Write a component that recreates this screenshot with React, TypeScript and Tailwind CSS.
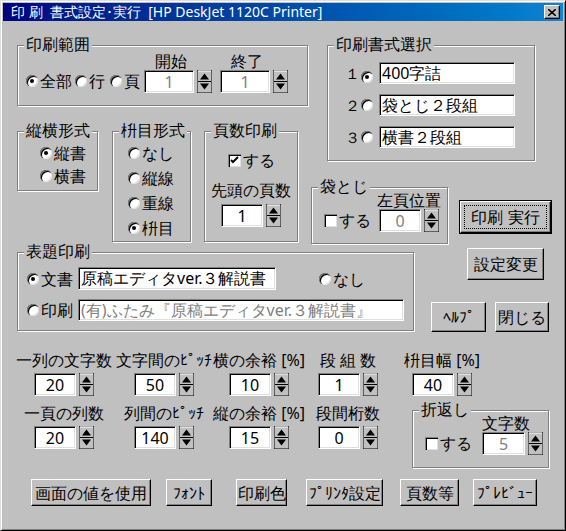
import React from "react";

const SUNK = "bg-white border border-t-[#808080] border-l-[#808080] border-r-white border-b-white shadow-[inset_1px_1px_0_#000,inset_-1px_-1px_0_#dfdfdf]";
const RAISED = "bg-[#c0c0c0] border border-t-white border-l-white border-r-black border-b-black shadow-[inset_-1px_-1px_0_#808080]";

function Group({ label, className, children }: { label: string; className?: string; children?: React.ReactNode }) {
  return (
    <div className={"relative border border-[#808080] shadow-[1px_1px_0_#fff,inset_1px_1px_0_#fff] " + (className || "")}>
      <span className="absolute -top-[11px] left-[6px] px-[2px] bg-[#c0c0c0] leading-[18px] text-[16px] whitespace-nowrap">{label}</span>
      {children}
    </div>
  );
}

function Radio({ on }: { on?: boolean }) {
  return (
    <span className="inline-flex shrink-0 w-[12px] h-[12px] rounded-full bg-white shadow-[inset_1px_1px_0_#808080,inset_2px_2px_0_#000,inset_-1px_-1px_0_#dfdfdf] items-center justify-center">
      {on && <span className="w-[4px] h-[4px] rounded-full bg-black" />}
    </span>
  );
}

function Check({ on }: { on?: boolean }) {
  return (
    <span className="inline-flex shrink-0 w-[13px] h-[13px] bg-white shadow-[inset_1px_1px_0_#808080,inset_2px_2px_0_#000,inset_-1px_-1px_0_#dfdfdf] items-center justify-center">
      {on && (
        <svg width="9" height="9" viewBox="0 0 9 9"><path d="M1 4 L3 6 L8 1" stroke="#000" strokeWidth="2" fill="none" /></svg>
      )}
    </span>
  );
}

function Spin({ h = 23 }: { h?: number }) {
  return (
    <svg width="15" height={h} viewBox={`0 0 15 ${h}`} className="shrink-0 block">
      <rect x="0" y="0" width="15" height={h} fill="#c0c0c0" />
      <path d={`M0 0 H15 V${h} H0 Z`} fill="none" stroke="#000" strokeWidth="1" />
      <path d={`M1 1 H14`} stroke="#fff" />
      <path d={`M7.5 ${h / 2 - 8} L12 ${h / 2 - 2} L3 ${h / 2 - 2} Z`} fill="#000" />
      <path d={`M7.5 ${h / 2 + 8} L12 ${h / 2 + 2} L3 ${h / 2 + 2} Z`} fill="#000" />
      <path d={`M1 ${h / 2} H14`} stroke="#000" />
    </svg>
  );
}

function Num({ v, w = 42, h = 23, dis }: { v: string; w?: number; h?: number; dis?: boolean }) {
  return (
    <div className="flex items-center gap-[3px]">
      <div className={SUNK + " flex items-center justify-center text-[16px] " + (dis ? "text-[#808080]" : "text-black")} style={{ width: w, height: h }}>{v}</div>
      <Spin h={h} />
    </div>
  );
}

function Btn({ children, className }: { children: React.ReactNode; className?: string }) {
  return <div className={RAISED + " flex items-center justify-center text-[16px] whitespace-nowrap " + (className || "")}>{children}</div>;
}

function Field({ label, v, w }: { label: string; v: string; w: number }) {
  return (
    <div className="flex flex-col items-center shrink-0" style={{ width: w }}>
      <div className="text-[16px] leading-[18px] whitespace-nowrap">{label}</div>
      <div className="mt-[4px]"><Num v={v} /></div>
    </div>
  );
}

export default function App() {
  return (
    <div className="w-[566px] h-[531px] bg-[#c0c0c0] text-black overflow-hidden border border-t-[#dfdfdf] border-l-[#dfdfdf] border-r-black border-b-black shadow-[inset_1px_1px_0_#fff,inset_-1px_-1px_0_#808080] p-[2px] font-['Noto_Sans_CJK_JP','Noto_Sans',sans-serif]">
      {/* title bar */}
      <div className="h-[18px] flex items-center bg-gradient-to-r from-[#000080] to-[#1084d0] text-white text-[14px] pl-[8px] pr-[3px]">
        <span className="leading-[18px] whitespace-nowrap">印 刷&nbsp; 書式設定･実行&nbsp; [HP DeskJet 1120C Printer]</span>
        <div className={RAISED + " ml-auto w-[16px] h-[14px] flex items-center justify-center"}>
          <svg width="8" height="7" viewBox="0 0 8 7"><path d="M0 0 L8 7 M8 0 L0 7" stroke="#000" strokeWidth="1.6" /></svg>
        </div>
      </div>

      {/* section A */}
      <div className="flex h-[231px]">
        <div className="ml-[14px] w-[291px] shrink-0">
          <Group label="印刷範囲" className="mt-[24px] h-[61px] w-[291px]">
            <div className="flex items-end pl-[8px] pt-[6px]">
              <div className="flex items-center h-[24px] text-[16px] whitespace-nowrap">
                <Radio on /><span className="ml-[2px]">全部</span>
                <span className="ml-[3px]"><Radio /></span><span className="ml-[2px]">行</span>
                <span className="ml-[5px]"><Radio /></span><span className="ml-[2px]">頁</span>
              </div>
              <div className="ml-[4px] flex flex-col items-center">
                <span className="text-[16px] leading-[18px] -ml-[14px]">開始</span>
                <Num v="1" w={50} dis />
              </div>
              <div className="ml-[8px] flex flex-col items-center">
                <span className="text-[16px] leading-[18px] -ml-[14px]">終了</span>
                <Num v="1" w={50} dis />
              </div>
            </div>
          </Group>
          <div className="flex items-start mt-[25px]">
            <Group label="縦横形式" className="w-[81px] h-[60px]">
              <div className="flex flex-col pl-[22px] pt-[12px] gap-[5px] text-[16px] leading-[18px]">
                <div className="flex items-center gap-[2px]"><Radio on />縦書</div>
                <div className="flex items-center gap-[2px]"><Radio />横書</div>
              </div>
            </Group>
            <Group label="枡目形式" className="ml-[14px] w-[79px] h-[111px]">
              <div className="flex flex-col pl-[15px] pt-[12px] gap-[7px] text-[16px] leading-[18px]">
                <div className="flex items-center gap-[2px]"><Radio />なし</div>
                <div className="flex items-center gap-[2px]"><Radio />縦線</div>
                <div className="flex items-center gap-[2px]"><Radio />重線</div>
                <div className="flex items-center gap-[2px]"><Radio on />枡目</div>
              </div>
            </Group>
            <Group label="頁数印刷" className="ml-[13px] w-[94px] h-[111px]">
              <div className="flex flex-col items-center pt-[19px] text-[16px] leading-[18px]">
                <div className="flex items-center gap-[2px]"><Check on />する</div>
                <div className="mt-[12px] whitespace-nowrap">先頭の頁数</div>
                <div className="mt-[5px]"><Num v="1" /></div>
              </div>
            </Group>
          </div>
        </div>
        <div className="ml-[19px] w-[225px] shrink-0">
          <Group label="印刷書式選択" className="mt-[24px] w-[208px] h-[116px]">
            <div className="flex flex-col pt-[16px] gap-[10px] text-[16px]">
              {["400字詰", "袋とじ２段組", "横書２段組"].map((t, i) => (
                <div key={t} className="flex items-center h-[22px]">
                  <span className="ml-[17px] w-[12px] text-[15px]">{["１", "２", "３"][i]}</span>
                  <span className="ml-[4px]"><Radio on={i === 0} /></span>
                  <div className={SUNK + " ml-[6px] w-[136px] h-[22px] leading-[20px] pl-[2px] whitespace-nowrap"}>{t}</div>
                </div>
              ))}
            </div>
          </Group>
          <div className="flex items-start mt-[26px] -ml-[16px]">
            <Group label="袋とじ" className="w-[137px] h-[57px]">
              <div className="flex items-end pl-[12px] pt-[3px] text-[16px] leading-[18px]">
                <div className="flex items-center gap-[2px] h-[24px]"><Check />する</div>
                <div className="ml-[6px] flex flex-col items-center">
                  <span className="whitespace-nowrap">左頁位置</span>
                  <Num v="0" dis />
                </div>
              </div>
            </Group>
            <div className="ml-[11px] mt-[13px] w-[93px] h-[34px] border border-black">
              <div className={RAISED + " w-full h-full flex items-center justify-center p-[3px]"}>
                <div className="w-full h-full border border-dotted border-black flex items-center justify-center text-[16px]">印刷 実行</div>
              </div>
            </div>
          </div>
        </div>
      </div>

      {/* section B */}
      <div className="flex items-start h-[99px]">
        <Group label="表題印刷" className="ml-[14px] w-[397px] h-[79px] shrink-0">
          <div className="flex flex-col pl-[9px] pt-[14px] gap-[9px] text-[16px] leading-[18px]">
            <div className="flex items-center">
              <Radio on /><span className="ml-[2px]">文書</span>
              <div className={SUNK + " ml-[5px] w-[198px] h-[23px] leading-[21px] pl-[2px] whitespace-nowrap"}>原稿エディタver.３解説書</div>
              <span className="ml-[43px]"><Radio /></span><span className="ml-[2px]">なし</span>
            </div>
            <div className="flex items-center">
              <Radio /><span className="ml-[2px]">印刷</span>
              <div className={SUNK + " ml-[5px] w-[326px] h-[22px] leading-[20px] pl-[2px] whitespace-nowrap text-[#808080]"}>(有)ふたみ『原稿エディタver.３解説書』</div>
            </div>
          </div>
        </Group>
        <div className="ml-[53px] -mt-[4px] shrink-0">
          <Btn className="w-[77px] h-[32px]">設定変更</Btn>
          <div className="flex mt-[22px] -ml-[36px]">
            <Btn className="w-[55px] h-[30px]">ﾍﾙﾌﾟ</Btn>
            <Btn className="ml-[9px] w-[54px] h-[30px]">閉じる</Btn>
          </div>
        </div>
      </div>

      {/* section C */}
      <div className="flex ml-[11px] mt-[0px]">
        <Field label="一列の文字数" v="20" w={100} />
        <Field label="文字間のﾋﾟｯﾁ" v="50" w={100} />
        <Field label="横の余裕 [%]" v="10" w={90} />
        <Field label="段 組 数" v="1" w={88} />
        <Field label="枡目幅 [%]" v="40" w={100} />
      </div>
      <div className="flex ml-[11px] mt-[8px] items-start">
        <Field label="一頁の列数" v="20" w={100} />
        <Field label="列間のﾋﾟｯﾁ" v="140" w={100} />
        <Field label="縦の余裕 [%]" v="15" w={90} />
        <Field label="段間桁数" v="0" w={88} />
        <Group label="折返し" className="ml-[20px] mt-[6px] w-[137px] h-[58px]">
          <div className="flex items-end pl-[12px] pt-[3px] text-[16px] leading-[18px]">
            <div className="flex items-center gap-[2px] h-[24px]"><Check />する</div>
            <div className="ml-[10px] flex flex-col items-center">
              <span className="whitespace-nowrap -ml-[14px]">文字数</span>
              <Num v="5" w={43} dis />
            </div>
          </div>
        </Group>
      </div>

      {/* section D */}
      <div className="flex mt-[11px] ml-[28px]">
        <Btn className="w-[120px] h-[27px]">画面の値を使用</Btn>
        <Btn className="ml-[15px] w-[46px] h-[27px]">ﾌｫﾝﾄ</Btn>
        <Btn className="ml-[24px] w-[51px] h-[27px]">印刷色</Btn>
        <Btn className="ml-[19px] w-[77px] h-[27px]">ﾌﾟﾘﾝﾀ設定</Btn>
        <Btn className="ml-[17px] w-[59px] h-[27px]">頁数等</Btn>
        <Btn className="ml-[14px] w-[64px] h-[27px]">ﾌﾟﾚﾋﾞｭｰ</Btn>
      </div>
    </div>
  );
}
